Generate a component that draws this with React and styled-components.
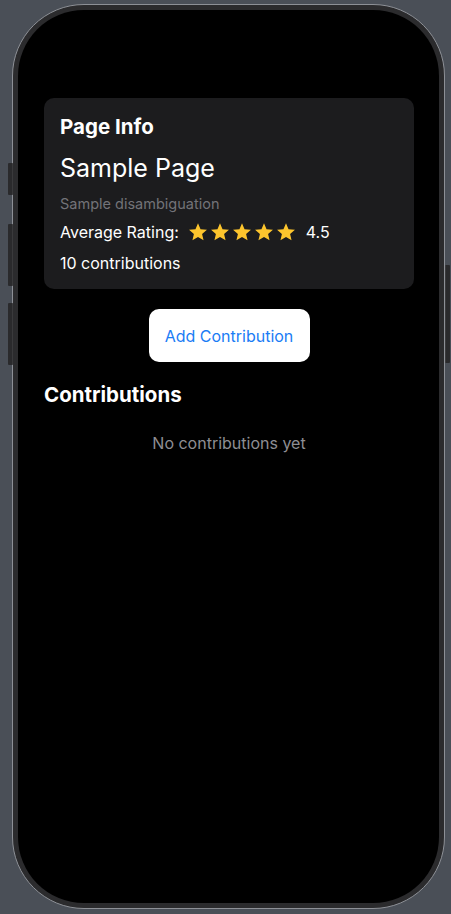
import React from "react";
import styled, { createGlobalStyle } from "styled-components";

const Global = createGlobalStyle`
  html, body { margin: 0; padding: 0; background: #4a4f57; }
  body { font-family: Inter, "Noto Sans", "Liberation Sans", sans-serif; -webkit-font-smoothing: antialiased; }
  #root { width: 451px; height: 914px; }
`;

const Stage = styled.div`
  width: 451px;
  height: 914px;
  padding: 4px 6px 5px 12px;
  box-sizing: border-box;
`;

const Frame = styled.div`
  position: relative;
  height: 100%;
  box-sizing: border-box;
  border: 1px solid #8d9096;
  border-radius: 72px;
  background: #2b2b2d;
  padding: 5px;
`;

const SideButton = styled.div`
  position: absolute;
  width: 4px;
  top: ${(p) => p.$top}px;
  height: ${(p) => p.$h}px;
  ${(p) => (p.$right ? "right: -6px;" : "left: -5px;")}
  background: #2a2a2c;
  border-radius: 1px;
  border-${(p) => (p.$right ? "left" : "right")}: 1px solid #3a3a3c;
`;

const Screen = styled.div`
  height: 100%;
  background: #000;
  border-radius: 66px;
  overflow: hidden;
  padding: 88px 25px 0 26px;
  box-sizing: border-box;
  display: flex;
  flex-direction: column;
`;

const Card = styled.div`
  background: #1c1c1e;
  border-radius: 10px;
  padding: 17px 16px 16px;
  display: flex;
  flex-direction: column;
`;

const CardTitle = styled.div`
  color: #fff;
  font-weight: 700;
  font-size: 20.5px;
  line-height: 24px;
`;

const PageTitle = styled.div`
  color: #fff;
  font-size: 25px;
  line-height: 30px;
  margin-top: 14px;
`;

const Subtitle = styled.div`
  color: #737378;
  font-size: 14.5px;
  line-height: 18px;
  margin-top: 12px;
`;

const Row = styled.div`
  display: flex;
  align-items: center;
  color: #fff;
  font-size: 16px;
  line-height: 20px;
  margin-top: ${(p) => p.$mt || 0}px;
`;

const Stars = styled.div`
  display: flex;
  gap: 2px;
  margin: 0 10px 0 9px;
`;

const Button = styled.button`
  align-self: center;
  margin-top: 20px;
  width: 161px;
  height: 53px;
  background: #fff;
  border: none;
  border-radius: 10px;
  color: #1a7cf5;
  font-family: inherit;
  font-size: 16px;
`;

const SectionTitle = styled.div`
  color: #fff;
  font-weight: 700;
  font-size: 20.5px;
  line-height: 24px;
  margin-top: 21px;
`;

const Empty = styled.div`
  color: #8e8e93;
  font-size: 16px;
  line-height: 20px;
  text-align: center;
  margin-top: 26px;
`;

const Star = () => (
  <svg width="20" height="20" viewBox="0 0 24 24">
    <path
      d="M12 1.6l3.05 7.1 7.7.66-5.84 5.06 1.76 7.53L12 17.96l-6.67 3.99 1.76-7.53L1.25 9.36l7.7-.66z"
      fill="#fdc52d"
    />
  </svg>
);

export default function App() {
  return (
    <>
      <Global />
      <Stage>
        <Frame>
          <SideButton $top={158} $h={32} />
          <SideButton $top={219} $h={62} />
          <SideButton $top={298} $h={62} />
          <SideButton $right $top={260} $h={98} />
          <Screen>
            <Card>
              <CardTitle>Page Info</CardTitle>
              <PageTitle>Sample Page</PageTitle>
              <Subtitle>Sample disambiguation</Subtitle>
              <Row $mt={9}>
                Average Rating:
                <Stars>
                  <Star />
                  <Star />
                  <Star />
                  <Star />
                  <Star />
                </Stars>
                4.5
              </Row>
              <Row $mt={11}>10 contributions</Row>
            </Card>
            <Button>Add Contribution</Button>
            <SectionTitle>Contributions</SectionTitle>
            <Empty>No contributions yet</Empty>
          </Screen>
        </Frame>
      </Stage>
    </>
  );
}
